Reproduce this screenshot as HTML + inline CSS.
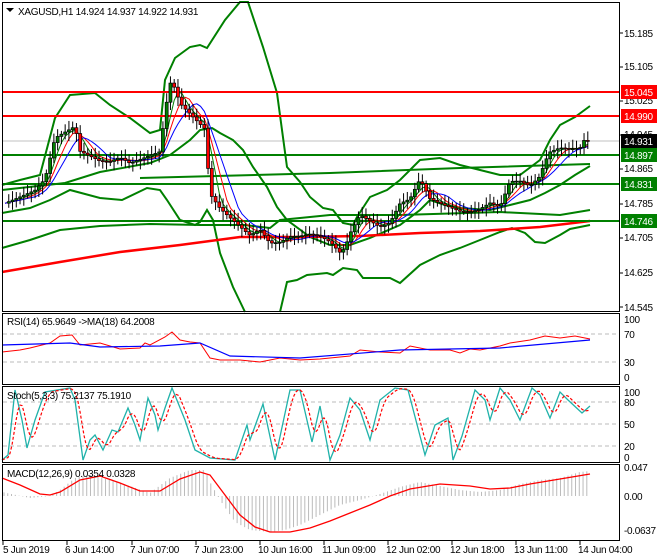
<!DOCTYPE html><html><head><meta charset="utf-8"><style>
body{margin:0;background:#fff;width:660px;height:560px;overflow:hidden;font-family:"Liberation Sans",sans-serif}
svg{display:block}
text{font-family:"Liberation Sans",sans-serif;font-size:10px;letter-spacing:-0.3px}
</style></head><body>
<svg id="s" width="660" height="560" xmlns="http://www.w3.org/2000/svg">
<rect x="0" y="0" width="660" height="560" fill="#fff"/>
<g id="g"></g>
<rect x="2.5" y="2.5" width="617" height="309" fill="none" stroke="#000"/>
<rect x="2.5" y="313.5" width="617" height="71" fill="none" stroke="#000"/>
<rect x="2.5" y="386.5" width="617" height="76" fill="none" stroke="#000"/>
<rect x="2.5" y="464.5" width="617" height="76" fill="none" stroke="#000"/>
<g fill="#000">
<polygon points="6,8 14,8 10,12"/>
<text x="18" y="15">XAGUSD,H1  14.924 14.937 14.922 14.931</text>
<text x="7" y="325">RSI(14) 65.9649  -&gt;MA(18) 64.2008</text>
<text x="7" y="399">Stoch(5,3,3) 75.2137 75.1910</text>
<text x="7" y="477">MACD(12,26,9) 0.0354 0.0328</text>
<text x="624" y="37">15.185</text>
<text x="624" y="70">15.105</text>
<text x="624" y="104">15.025</text>
<text x="624" y="138">14.945</text>
<text x="624" y="172">14.865</text>
<text x="624" y="207">14.785</text>
<text x="624" y="241">14.705</text>
<text x="624" y="276">14.625</text>
<text x="624" y="311">14.545</text>
<text x="624" y="323">100</text><text x="624" y="338">70</text><text x="624" y="366">30</text><text x="624" y="381">0</text>
<text x="624" y="396">100</text><text x="624" y="406">80</text><text x="624" y="428">50</text><text x="624" y="450">20</text><text x="624" y="461">0</text>
<text x="624" y="471">0.047</text><text x="624" y="500">0.00</text><text x="624" y="534">-0.0637</text>
<text x="3" y="553">5 Jun 2019</text><text x="65" y="553">6 Jun 14:00</text><text x="130" y="553">7 Jun 07:00</text><text x="194" y="553">7 Jun 23:00</text><text x="258" y="553">10 Jun 16:00</text><text x="322" y="553">11 Jun 09:00</text><text x="386" y="553">12 Jun 02:00</text><text x="450" y="553">12 Jun 18:00</text><text x="514" y="553">13 Jun 11:00</text><text x="578" y="553">14 Jun 04:00</text>
</g>
<g stroke="#000">
<line x1="620" y1="33" x2="623" y2="33"/><line x1="620" y1="67" x2="623" y2="67"/><line x1="620" y1="101" x2="623" y2="101"/><line x1="620" y1="135" x2="623" y2="135"/><line x1="620" y1="169" x2="623" y2="169"/><line x1="620" y1="204" x2="623" y2="204"/><line x1="620" y1="238" x2="623" y2="238"/><line x1="620" y1="273" x2="623" y2="273"/><line x1="620" y1="307" x2="623" y2="307"/>
<line x1="3" y1="541" x2="3" y2="545"/><line x1="67" y1="541" x2="67" y2="545"/><line x1="132" y1="541" x2="132" y2="545"/><line x1="196" y1="541" x2="196" y2="545"/><line x1="260" y1="541" x2="260" y2="545"/><line x1="324" y1="541" x2="324" y2="545"/><line x1="388" y1="541" x2="388" y2="545"/><line x1="452" y1="541" x2="452" y2="545"/><line x1="516" y1="541" x2="516" y2="545"/><line x1="580" y1="541" x2="580" y2="545"/>
</g>
<g>
<rect x="621" y="85" width="36" height="14" fill="#f00"/><text x="624" y="96" fill="#fff">15.045</text>
<rect x="621" y="109" width="36" height="14" fill="#f00"/><text x="624" y="120" fill="#fff">14.990</text>
<rect x="621" y="134" width="36" height="14" fill="#000"/><text x="624" y="145" fill="#fff">14.931</text>
<rect x="621" y="148" width="36" height="14" fill="#008000"/><text x="624" y="159" fill="#fff">14.897</text>
<rect x="621" y="177" width="36" height="14" fill="#008000"/><text x="624" y="188" fill="#fff">14.831</text>
<rect x="621" y="214" width="36" height="14" fill="#008000"/><text x="624" y="225" fill="#fff">14.746</text>
</g>
</svg>
<script>
var g=document.getElementById('g'),NS='http://www.w3.org/2000/svg';
function el(t,a){var e=document.createElementNS(NS,t);for(var k in a)e.setAttribute(k,a[k]);g.appendChild(e);return e}
function pl(p,c,w,d){var s=[];for(var i=0;i<p.length;i+=2)s.push(p[i]+','+p[i+1]);var o={points:s.join(' '),fill:'none',stroke:c,'stroke-width':w||1};if(d)o['stroke-dasharray']=d;el('polyline',o)}
function interp(p,x){for(var i=0;i<p.length-2;i+=2){if(x<=p[i+2]){var t=(x-p[i])/(p[i+2]-p[i]);return p[i+1]+t*(p[i+3]-p[i+1])}}return p[p.length-1]}
function sm(arr,n){var o=[];for(var i=0;i<arr.length;i++){var a=0,c=0;for(var j=Math.max(0,i-n+1);j<=i;j++){a+=arr[j];c++}o.push(a/c)}return o}
[334,362,402,424,446].forEach(function(v){el('line',{x1:3,x2:619,y1:v,y2:v,stroke:'#bbb','stroke-dasharray':'4,3'})});
el('line',{x1:3,x2:619,y1:141,y2:141,stroke:'#c0c0c0'});
var G='#008000';
// upper band
pl([2,185,20,180,40,175,55,118,70,95,95,93,110,105,130,118,150,133,160,130,165,80,175,58,190,47,200,45,207,48,225,20,240,2,248,2,263,47,277,93,287,167,300,182,310,197,323,208,333,210,343,223,353,225,357,217,370,197,387,190,400,180,420,160,440,158,460,165,480,170,500,175,520,175,540,160,550,140,560,125,575,117,590,106],G,2);
// lower band
pl([2,213,30,208,50,200,70,190,100,198,122,200,147,188,160,190,167,200,180,220,195,225,200,222,207,210,213,220,220,253,233,287,245,312],G,2);
pl([280,312,287,282,297,280,307,275,327,273,333,275,343,268,357,270,363,278,390,278,400,283,420,265,440,255,460,248,480,240,500,232,512,228,525,233,535,242,545,243,560,235,570,229,580,227,590,225],G,2);
// middle band
pl([2,190,65,183,100,172,150,163,170,155,190,140,200,130,212,128,220,133,233,140,243,150,253,167,267,187,277,207,287,220,310,237,330,245,350,245,370,238,400,225,420,210,430,200,445,205,460,208,490,210,510,205,530,200,545,193,560,185,575,175,590,166],G,2);
pl([140,178,330,173,460,168,590,164],G,2);
pl([2,248,30,240,60,230,100,226,150,224,200,225,245,225,270,228,280,220,300,218,330,215,400,215,500,212,560,215,590,210],G,2);
pl([2,272,60,262,120,252,180,245,240,237,300,237,360,236,420,233,480,231,540,227,590,221],'#f00',2.5);
el('line',{x1:3,x2:619,y1:92,y2:92,stroke:'#f00','stroke-width':2});
el('line',{x1:3,x2:619,y1:116,y2:116,stroke:'#f00','stroke-width':2});
[155,184,221].forEach(function(y){el('line',{x1:3,x2:619,y1:y,y2:y,stroke:G,'stroke-width':2})});
var P=[5,200,20,195,35,190,45,180,55,140,65,135,75,130,80,155,90,160,100,165,110,165,120,160,130,165,140,160,150,155,160,150,165,110,170,80,175,85,180,100,190,110,200,120,205,125,210,190,220,205,230,215,240,225,250,235,260,230,270,245,280,245,290,240,300,240,310,238,320,240,330,245,340,255,345,250,350,235,360,215,370,220,380,225,390,220,400,200,410,195,420,175,430,195,440,200,450,205,460,210,470,212,480,210,490,205,500,210,510,185,520,185,530,190,540,180,545,165,550,155,560,150,570,150,580,148,585,138,590,141];
var xs=[],cs=[];for(var x=5;x<=590;x+=3.76){xs.push(x);cs.push(interp(P,x)+Math.sin(x*1.7)*4)}
function line(arr,c){var p=[];for(var i=0;i<xs.length;i++)p.push(xs[i].toFixed(1),arr[i].toFixed(1));pl(p,c,1)}
line(sm(cs,4),G);line(sm(cs,6),'#f00');line(sm(cs,9),'#00f');
for(var i=1;i<xs.length;i++){var o=cs[i-1],c=cs[i],t=Math.min(o,c),b=Math.max(o,c);var xx=xs[i];
el('line',{x1:xx,x2:xx,y1:t-3-Math.abs(Math.sin(i*2.3))*6,y2:b+3+Math.abs(Math.cos(i*1.3))*6,stroke:'#000'});
el('rect',{x:xx-1.5,y:t,width:3,height:Math.max(1,b-t),fill:c<o?'#008000':'#f00',stroke:'#000','stroke-width':0.7});}
pl([2,352,20,350,30,348,50,343,60,336,72,335,80,345,100,343,120,349,140,348,145,343,150,345,165,337,172,332,180,340,190,342,200,343,210,358,220,360,240,360,260,362,280,358,300,360,320,359,330,358,350,356,360,350,380,352,400,353,410,346,430,350,450,350,460,353,470,349,480,350,500,346,510,343,530,340,545,336,560,338,575,336,590,339],'#f00',1);
pl([2,345,70,343,100,347,160,346,200,343,230,356,300,358,400,350,500,348,590,340],'#00f',1.2);
var ST=[2,460,8,455,15,390,22,420,27,448,35,420,45,392,70,388,75,400,83,460,90,440,95,435,103,450,112,430,118,432,128,408,135,425,140,440,148,398,155,415,158,430,165,408,172,388,185,420,195,450,210,458,235,460,247,425,250,440,263,404,275,460,290,390,300,390,312,442,320,406,330,460,340,435,350,398,360,410,370,440,380,400,395,388,408,390,425,455,435,425,448,418,453,460,462,436,475,390,485,400,490,420,500,388,510,400,520,420,532,388,540,395,550,418,560,392,568,400,582,413,590,406];
pl(ST,'#20b2aa',1.3);
var sx=[],sy=[];for(var x=2;x<=590;x+=2){sx.push(x);sy.push(interp(ST,x))}var ss=sm(sy,5),sp=[];for(var i=0;i<sx.length;i++)sp.push(sx[i],ss[i].toFixed(1));pl(sp,'#f00',1.2,'3,2');
var MH=[2,492,30,498,50,496,60,490,75,478,90,475,110,480,130,486,150,493,170,478,190,470,205,470,210,482,220,500,235,522,250,530,270,532,285,530,300,525,320,515,340,505,360,500,380,494,400,487,420,482,440,486,460,490,480,492,500,490,520,484,540,480,560,478,580,472,590,471];
for(var x=4;x<=590;x+=3.76){var v=interp(MH,x);el('line',{x1:x,x2:x,y1:496,y2:v,stroke:'#bbb','stroke-width':1})}
pl([2,478,20,485,40,494,50,495,60,492,80,480,100,476,120,483,140,491,160,491,180,479,200,472,210,475,225,495,240,515,255,527,270,532,290,532,310,528,330,521,350,513,370,505,390,496,410,489,440,484,470,486,490,489,510,488,530,484,560,479,590,474],'#f00',1.3);
</script>
</body></html>
